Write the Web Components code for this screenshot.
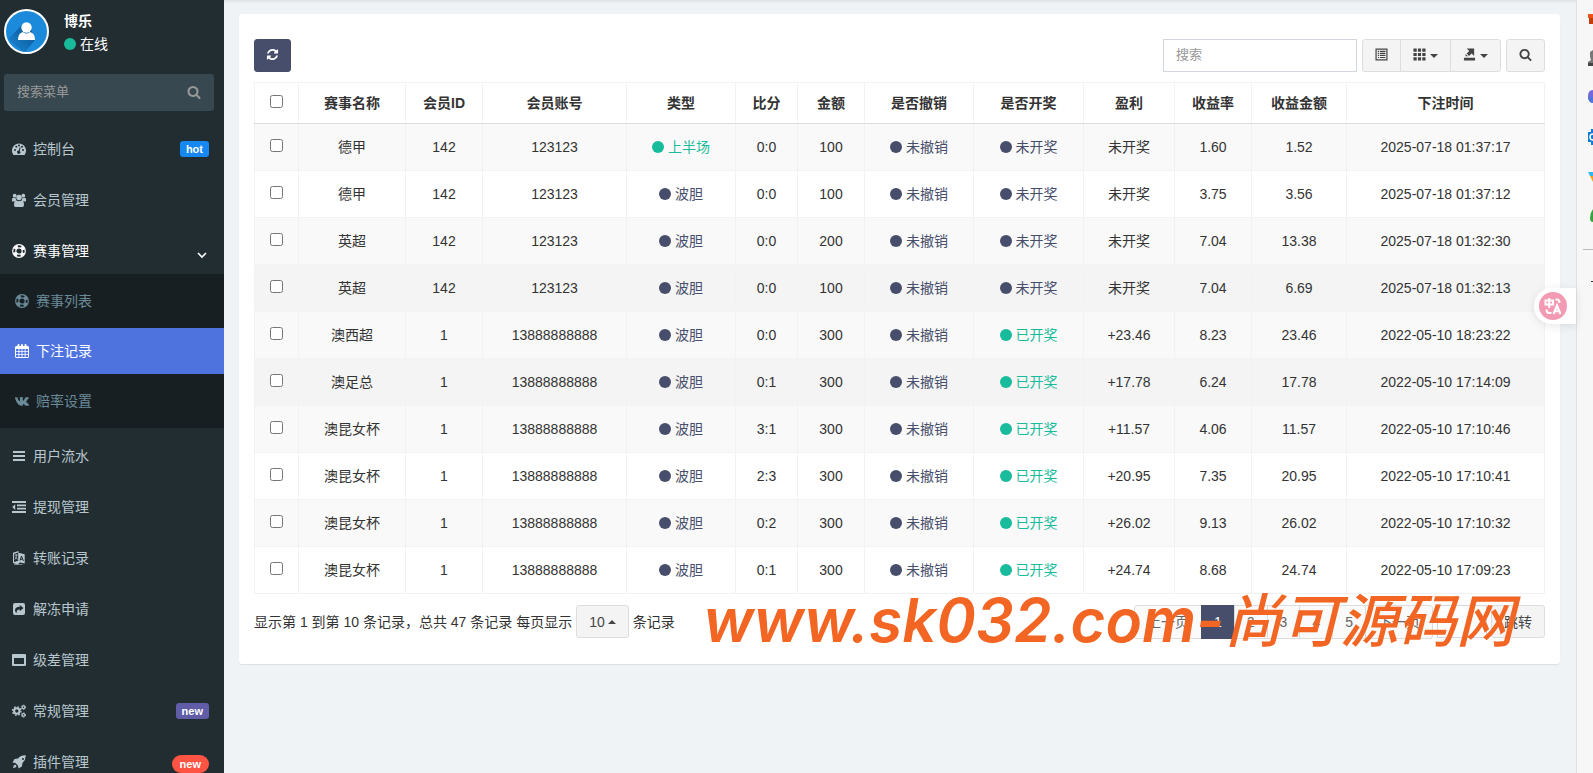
<!DOCTYPE html>
<html lang="zh-CN">
<head>
<meta charset="utf-8">
<title>下注记录</title>
<style>
  body {
    margin: 0;
    background: #eff3f6;
    color: #333;
    font: 14px/20px "Liberation Sans", "Noto Sans CJK SC", sans-serif;
  }
</style>
</head>
<body>
<admin-shell>
  <admin-sidebar slot="sidebar">
    <user-panel slot="user" name="博乐" status="在线"></user-panel>
    <menu-item icon="dashboard" badge="hot" tone="blue">控制台</menu-item>
    <menu-item icon="group">会员管理</menu-item>
    <menu-item icon="ring" open>赛事管理</menu-item>
    <sub-menu>
      <menu-item sub icon="ring">赛事列表</menu-item>
      <menu-item sub active icon="calendar">下注记录</menu-item>
      <menu-item sub icon="vk">赔率设置</menu-item>
    </sub-menu>
    <menu-item icon="bars">用户流水</menu-item>
    <menu-item icon="dedent">提现管理</menu-item>
    <menu-item icon="language">转账记录</menu-item>
    <menu-item icon="share">解冻申请</menu-item>
    <menu-item icon="window">级差管理</menu-item>
    <menu-item icon="cogs" badge="new" tone="purple">常规管理</menu-item>
    <menu-item icon="rocket" badge="new" tone="red">插件管理</menu-item>
  </admin-sidebar>
  <content-panel>
    <table-toolbar></table-toolbar>
    <bet-table></bet-table>
    <table-pager></table-pager>
  </content-panel>
  <browser-rail slot="rail"></browser-rail>
</admin-shell>

<script>
const icons = {
  search: '<g transform="scale(.0078125)"><path d="M1216 832q0-185-131.500-316.500t-316.500-131.500-316.500 131.500-131.500 316.500 131.500 316.500 316.500 131.500 316.500-131.500 131.500-316.500zm512 832q0 52-38 90t-90 38q-54 0-90-38l-343-342q-179 124-399 124-143 0-273.500-55.500t-225-150-150-225-55.500-273.500 55.500-273.500 150-225 225-150 273.500-55.500 273.500 55.500 225 150 150 225 55.500 273.500q0 220-124 399l343 343q37 37 37 90z"/></g>',
  refresh: '<g transform="scale(.0078125)"><path d="M1639 1056q0 5-1 7-64 268-268 434.500t-478 166.500q-146 0-282.500-55t-243.500-157l-129 129q-19 19-45 19t-45-19-19-45v-448q0-26 19-45t45-19h448q26 0 45 19t19 45-19 45l-137 137q71 66 161 102t187 36q134 0 250-65t186-179q11-17 53-117 8-23 30-23h192q13 0 22.500 9.500t9.500 22.500zm25-800v448q0 26-19 45t-45 19h-448q-26 0-45-19t-19-45 19-45l138-138q-148-137-349-137-134 0-250 65t-186 179q-11 17-53 117-8 23-30 23h-199q-13 0-22.500-9.500t-9.500-22.500v-7q65-268 270-434.500t480-166.500q146 0 284 55.500t245 156.500l130-129q19-19 45-19t45 19 19 45z"/></g>',
  dashboard: '<path fill-rule="evenodd" d="M1.200 12.500A7 7 0 1 1 12.800 12.500Q12.600 13 12.200 13H1.800Q1.400 13 1.200 12.500ZM2 8a1 1 0 1 0 2 0a1 1 0 1 0-2 0M3.300 4.700a1 1 0 1 0 2 0a1 1 0 1 0-2 0M6 3.500a1 1 0 1 0 2 0a1 1 0 1 0-2 0M10 8a1 1 0 1 0 2 0a1 1 0 1 0-2 0M9 4.700a1 1 0 1 0 2 0a1 1 0 1 0-2 0M7.700 5.300L6.700 8.600a1.600 1.600 0 1 0 1 .3L8.600 5.600Z"/>',
  group: '<circle cx="2.700" cy="2.700" r="1.900"/><circle cx="11.300" cy="2.700" r="1.900"/><circle cx="7" cy="4.500" r="2.700"/><path d="M0 8V6.400Q0 4.700 1.200 4.700L3.800 5.300Q3.800 6.500 4.600 7.400Q3.200 7.400 2.400 8.400H.8Q0 8.400 0 8ZM14 8V6.400Q14 4.700 12.800 4.700L10.200 5.300Q10.200 6.500 9.400 7.400Q10.800 7.400 11.600 8.400H13.200Q14 8.400 14 8ZM4.500 7.500Q7 9 9.500 7.500Q12 7.500 12 12Q12 14 10.400 14H3.600Q2 14 2 12Q2 7.500 4.500 7.500Z"/>',
  ring: '<circle cx="7" cy="7" r="6.300" fill="none" stroke="currentColor" stroke-width="1.200"/><circle cx="7" cy="7" r="3.200" fill="none" stroke="currentColor" stroke-width="1.200"/><circle cx="7" cy="7" r="4.800" fill="none" stroke="currentColor" stroke-width="2.800" stroke-dasharray="3.770 3.770" stroke-dashoffset="-1.885"/>',
  calendar: '<path fill-rule="evenodd" d="M1 2H2.500V1Q2.500 0 3.500 0T4.500 1V2H6V1Q6 0 7 0T8 1V2H9.500V1Q9.500 0 10.500 0T11.500 1V2H13L14 3V13L13 14H1L0 13V3ZM1 5V7H3.500V5ZM4.300 5V7H6.600V5ZM7.400 5V7H9.700V5ZM10.500 5V7H13V5ZM1 7.800V10H3.500V7.800ZM4.300 7.800V10H6.600V7.800ZM7.400 7.800V10H9.700V7.800ZM10.500 7.800V10H13V7.800ZM1 10.800V13H3.500V10.800ZM4.300 10.800V13H6.600V10.800ZM7.400 10.800V13H9.700V10.800ZM10.500 10.800V13H13V10.800Z"/>',
  vk: '<path d="M0 3.200H2.300Q3 6 4.700 7.200Q5 7 5 6V4.400L4.300 3.400Q5 2.800 7.300 3Q7.800 3.200 7.800 4V6.700Q8 7 8.500 6.500Q9.700 5 10.400 3.200H13.500Q14.200 3.300 13.500 4.500L11.300 7.300Q11 7.800 11.600 8.300Q14 10.300 14 11.200Q13.900 11.700 13 11.700H11Q10.400 11.700 9.500 10.700Q8.400 9.600 8 10V11Q8 11.700 7.300 11.700Q3.500 12 1.200 7.200Q.1 5 0 3.200Z"/>',
  bars: '<path d="M1 2H13V4H1ZM1 6H13V8H1ZM1 10H13V12H1Z"/>',
  dedent: '<path d="M0 1H14V3H0ZM5 4.500H14V6.300H5ZM5 7.800H14V9.600H5ZM0 11H14V13H0ZM3.200 4.300V9.900L.2 7.100Z"/>',
  language: '<path fill-rule="evenodd" d="M1 1.800L6.500 0V1.800L12.700 3.200V12.500L8 11.500L5.500 13.500L1 11.900ZM2 3V11L6.200 9.800V1.500Z"/><path d="M2.700 4.300L5.500 3.500M4 3V5M5 4Q4.600 7 2.700 8.600M3 5.500Q4 7.700 5.800 8.300M2 13.700H10.500" fill="none" stroke="currentColor" stroke-width=".7"/><path d="M8.100 9.500L9.500 5L11.400 10M8.500 8.200H10.500" fill="none" stroke="#222d32" stroke-width="1"/>',
  share: '<path fill-rule="evenodd" d="M3 1H11Q13 1 13 3V11Q13 13 11 13H3Q1 13 1 11V3Q1 1 3 1ZM7.800 3V4.700Q3 4.700 3 8.200Q3 10 4.700 11.200Q4 7.800 7.800 7.500V9.300L11.500 6.100Z"/>',
  window: '<path fill-rule="evenodd" d="M1 1H13Q14 1 14 2V12Q14 13 13 13H1Q0 13 0 12V2Q0 1 1 1ZM2 5V11H12V5Z"/>',
  cogs: '<circle cx="4.800" cy="7" r="2.700" fill="none" stroke="currentColor" stroke-width="2"/><circle cx="4.800" cy="7" r="4.200" fill="none" stroke="currentColor" stroke-width="1.400" stroke-dasharray="1.650 1.650"/><g fill="none" stroke="currentColor"><circle cx="11.500" cy="3.200" r="1.400" stroke-width="1.200"/><circle cx="11.500" cy="3.200" r="2.200" stroke-dasharray="1.150 1.150"/><circle cx="11.500" cy="11" r="1.400" stroke-width="1.200"/><circle cx="11.500" cy="11" r="2.200" stroke-dasharray="1.150 1.150"/></g>',
  rocket: '<path fill-rule="evenodd" d="M13.700.3Q14 4.500 10.500 8L9.900 11.500L6.500 13.500L6 10.600L3.400 8L.5 7.500L2.500 4.100L6 3.500Q9 0 13.700.3ZM10 4a1 1 0 1 0 2 0a1 1 0 1 0-2 0M3 9.500L4.700 11.100Q4 13 1 13Q1.200 10 3 9.500Z"/>',
  list: '<path fill-rule="evenodd" d="M.5.500H13.500V13.500H.5ZM1.800 1.800V12.200H12.200V1.800Z"/><path d="M3 3H4.300V4.300H3ZM5.200 3H11.200V4.300H5.200ZM3 5.200H4.300V6.500H3ZM5.200 5.200H11.200V6.500H5.200ZM3 7.400H4.300V8.700H3ZM5.200 7.400H11.200V8.700H5.200ZM3 9.600H4.300V10.900H3ZM5.200 9.600H11.200V10.900H5.200Z"/>',
  grid: '<path d="M.5.500H4V4H.5ZM5.300.500H8.700V4H5.300ZM10 .5H13.500V4H10ZM.5 5.300H4V8.700H.5ZM5.300 5.300H8.700V8.700H5.300ZM10 5.300H13.500V8.700H10ZM.5 10H4V13.500H.5ZM5.300 10H8.700V13.500H5.300ZM10 10H13.500V13.500H10Z"/>',
  exporter: '<path d="M1 10.500H13V13.500H1ZM4 .5H12V8.500L9.300 5.800L6.500 8.500L4 6L6.700 3.200Z"/><path d="M2.800 6.500L5.500 9H2.800Z"/>',
  chevron: '<path d="M3 5L7 9L11 5" fill="none" stroke="currentColor" stroke-width="1.600"/>'
};

class FaIcon extends HTMLElement {
  constructor() {
    super();
    this.attachShadow({ mode: 'open' });
  }

  connectedCallback() {
    this.shadowRoot.innerHTML = `
      <style>
        :host {
          display: inline-block;
          flex: none;
          width: 14px;
          height: 14px;
        }
        svg {
          display: block;
          width: 100%;
          height: 100%;
          fill: currentColor;
        }
      </style>
      <svg viewBox="0 0 14 14" aria-hidden="true">${icons[this.getAttribute('name')] || ''}</svg>
    `;
  }
}
customElements.define('fa-icon', FaIcon);

class AdminShell extends HTMLElement {
  constructor() {
    super();
    this.attachShadow({ mode: 'open' });
    this.shadowRoot.innerHTML = `
      <style>
        :host {
          display: grid;
          grid-template-columns: 224px minmax(0, 1fr) 17px;
          height: 100vh;
          overflow: hidden;
        }
        main {
          position: relative;
          padding: 14px 16px 14px 15px;
          box-shadow: inset 0 3px 3px -2px #d5dade;
        }
      </style>
      <slot name="sidebar"></slot>
      <main>
        <slot></slot>
        <translate-bubble></translate-bubble>
        <site-mark></site-mark>
      </main>
      <slot name="rail"></slot>
    `;
  }
}
customElements.define('admin-shell', AdminShell);

class AdminSidebar extends HTMLElement {
  constructor() {
    super();
    this.attachShadow({ mode: 'open' });
    this.shadowRoot.innerHTML = `
      <style>
        :host {
          display: block;
          overflow: hidden;
          background: #222d32;
        }
        form {
          display: flex;
          height: 37px;
          margin: 11px 10px 15px 4px;
          background: #374850;
          border-radius: 3px;
        }
        input {
          flex: 1;
          min-width: 0;
          padding: 0 13px 2px;
          border: 0;
          background: none;
          color: #b8c7ce;
          font: 13px/20px "Liberation Sans", "Noto Sans CJK SC", sans-serif;
        }
        input::placeholder {
          color: #999;
        }
        button {
          display: flex;
          align-items: center;
          padding: 0 13px 2px;
          border: 0;
          background: none;
          color: #999;
        }
        nav {
          display: flex;
          flex-direction: column;
          gap: 5px;
        }
      </style>
      <slot name="user"></slot>
      <form>
        <input type="text" placeholder="搜索菜单" aria-label="搜索菜单">
        <button type="button" aria-label="搜索"><fa-icon name="search"></fa-icon></button>
      </form>
      <nav><slot></slot></nav>
    `;
  }
}
customElements.define('admin-sidebar', AdminSidebar);

class UserPanel extends HTMLElement {
  constructor() {
    super();
    this.attachShadow({ mode: 'open' });
  }

  connectedCallback() {
    this.shadowRoot.innerHTML = `
      <style>
        :host {
          display: flex;
          gap: 15px;
          padding: 9px 4px;
          color: #fff;
        }
        .avatar {
          width: 45px;
          height: 45px;
        }
        .info {
          display: flex;
          flex-direction: column;
          justify-content: flex-end;
          gap: 3px;
        }
        a {
          display: flex;
          align-items: center;
          gap: 4px;
          color: #fff;
          text-decoration: none;
        }
        a::before {
          content: "";
          width: 12px;
          height: 12px;
          border-radius: 50%;
          background: #18bc9c;
        }
      </style>
      <svg class="avatar" viewBox="0 0 45 45" aria-hidden="true">
        <defs>
          <clipPath id="round"><circle cx="22.500" cy="22.500" r="21"/></clipPath>
          <linearGradient id="shade" x1="1" y1="0" x2="0" y2="1">
            <stop offset=".2" stop-color="#0d5c9b"/><stop offset="1" stop-color="#1c8adb"/>
          </linearGradient>
        </defs>
        <circle cx="22.500" cy="22.500" r="21.500" fill="#1c8adb"/>
        <path clip-path="url(#round)" d="M18 16L4 30L20 44L31 31L27 20Z" fill="url(#shade)"/>
        <circle cx="22.500" cy="22.500" r="21.500" fill="none" stroke="#fff" stroke-width="2"/>
        <circle cx="22.500" cy="18.500" r="5.200" fill="#fff"/>
        <path d="M14 31Q14 24 19 23Q22.500 26 26 23Q31 24 31 31Z" fill="#fff"/>
      </svg>
      <div class="info">
        <strong>${this.getAttribute('name')}</strong>
        <a href="#">${this.getAttribute('status')}</a>
      </div>
    `;
  }
}
customElements.define('user-panel', UserPanel);

class MenuItem extends HTMLElement {
  constructor() {
    super();
    this.attachShadow({ mode: 'open' });
  }

  connectedCallback() {
    this.shadowRoot.innerHTML = `
      <style>
        :host {
          display: block;
        }
        a {
          display: flex;
          align-items: center;
          gap: 7px;
          height: 46px;
          padding: 0 15px 0 12px;
          color: #b8c7ce;
          text-decoration: none;
        }
        :host([open]) a {
          color: #fff;
        }
        :host([sub]) a {
          padding-left: 15px;
          color: #6b8a98;
        }
        :host([active]) a {
          background: #4e73df;
          color: #fff;
        }
        .label {
          flex: 1;
        }
        .badge {
          padding: 0 6px;
          border-radius: 3px;
          color: #fff;
          font-size: 11px;
          font-weight: 700;
          line-height: 16px;
        }
        .blue { background: #1688f1; }
        .purple { background: #605ca8; }
        .red {
          margin-top: 3px;
          padding: 1px 8px;
          border-radius: 9px;
          background: #ff5443;
        }
        .arrow {
          margin-top: 8px;
        }
      </style>
      <a href="#">
        <fa-icon name="${this.getAttribute('icon')}"></fa-icon>
        <span class="label"><slot></slot></span>
        ${this.badge}
      </a>
    `;
  }

  get badge() {
    if (this.hasAttribute('open')) return '<fa-icon class="arrow" name="chevron"></fa-icon>';
    const text = this.getAttribute('badge');
    return text ? `<span class="badge ${this.getAttribute('tone')}">${text}</span>` : '';
  }
}
customElements.define('menu-item', MenuItem);

class SubMenu extends HTMLElement {
  constructor() {
    super();
    this.attachShadow({ mode: 'open' });
    this.shadowRoot.innerHTML = `
      <style>
        :host {
          display: flex;
          flex-direction: column;
          gap: 4px;
          margin-top: -5px;
          padding: 4px 0;
          background: #171f23;
        }
      </style>
      <slot></slot>
    `;
  }
}
customElements.define('sub-menu', SubMenu);

class ContentPanel extends HTMLElement {
  constructor() {
    super();
    this.attachShadow({ mode: 'open' });
    this.shadowRoot.innerHTML = `
      <style>
        :host {
          display: flex;
          flex-direction: column;
          gap: 10px;
          padding: 25px 15px;
          border-radius: 3px;
          background: #fff;
          box-shadow: 0 1px 1px rgba(0, 0, 0, .08);
        }
      </style>
      <slot></slot>
    `;
  }
}
customElements.define('content-panel', ContentPanel);

class TableToolbar extends HTMLElement {
  constructor() {
    super();
    this.attachShadow({ mode: 'open' });
    this.shadowRoot.innerHTML = `
      <style>
        :host {
          display: flex;
          gap: 5px;
          height: 33px;
        }
        fa-icon {
          width: 13px;
          height: 13px;
        }
        button {
          display: flex;
          align-items: center;
          justify-content: center;
          gap: 4px;
          padding: 0 12px 3px;
          border: 1px solid #ddd;
          border-radius: 3px;
          background: #f4f4f4;
          color: #444;
        }
        .refresh {
          margin-right: auto;
          padding: 0 11px 3px;
          border-color: #474e6b;
          background: #474e6b;
          color: #fff;
        }
        input {
          box-sizing: border-box;
          width: 194px;
          padding: 0 12px 2px;
          border: 1px solid #d2d6de;
          font: 13px/20px "Liberation Sans", "Noto Sans CJK SC", sans-serif;
        }
        input::placeholder {
          color: #999;
        }
        .group {
          display: flex;
        }
        .group button {
          margin-left: -1px;
          border-radius: 0;
        }
        .group button:first-child {
          margin-left: 0;
          border-radius: 3px 0 0 3px;
        }
        .group button:last-child {
          border-radius: 0 3px 3px 0;
        }
        .caret {
          margin-top: 4px;
          border: 4px solid transparent;
          border-top-color: currentColor;
          border-bottom: 0;
        }
      </style>
      <button class="refresh" type="button" aria-label="刷新"><fa-icon name="refresh"></fa-icon></button>
      <input type="text" placeholder="搜索" aria-label="搜索">
      <div class="group">
        <button type="button" aria-label="切换"><fa-icon name="list"></fa-icon></button>
        <button type="button" aria-label="列"><fa-icon name="grid"></fa-icon><span class="caret"></span></button>
        <button type="button" aria-label="导出"><fa-icon name="exporter"></fa-icon><span class="caret"></span></button>
      </div>
      <button type="button" aria-label="普通搜索"><fa-icon name="search"></fa-icon></button>
    `;
  }
}
customElements.define('table-toolbar', TableToolbar);

class StatusDot extends HTMLElement {
  constructor() {
    super();
    this.attachShadow({ mode: 'open' });
    this.shadowRoot.innerHTML = `
      <style>
        :host {
          display: inline-flex;
          align-items: center;
          gap: 4px;
          color: #474e6b;
        }
        :host([on]) {
          color: #18bc9c;
        }
        :host::before {
          content: "";
          width: 12px;
          height: 12px;
          border-radius: 50%;
          background: currentColor;
        }
      </style>
      <slot></slot>
    `;
  }
}
customElements.define('status-dot', StatusDot);

const columns = [
  ['赛事名称', 107], ['会员ID', 77], ['会员账号', 144], ['类型', 109], ['比分', 62],
  ['金额', 67], ['是否撤销', 109], ['是否开奖', 110], ['盈利', 91], ['收益率', 77],
  ['收益金额', 95], ['下注时间', 198]
];

const rows = [
  ['德甲', '142', '123123', '上半场', '0:0', '100', '未撤销', '未开奖', '未开奖', '1.60', '1.52', '2025-07-18 01:37:17'],
  ['德甲', '142', '123123', '波胆', '0:0', '100', '未撤销', '未开奖', '未开奖', '3.75', '3.56', '2025-07-18 01:37:12'],
  ['英超', '142', '123123', '波胆', '0:0', '200', '未撤销', '未开奖', '未开奖', '7.04', '13.38', '2025-07-18 01:32:30'],
  ['英超', '142', '123123', '波胆', '0:0', '100', '未撤销', '未开奖', '未开奖', '7.04', '6.69', '2025-07-18 01:32:13'],
  ['澳西超', '1', '13888888888', '波胆', '0:0', '300', '未撤销', '已开奖', '+23.46', '8.23', '23.46', '2022-05-10 18:23:22'],
  ['澳足总', '1', '13888888888', '波胆', '0:1', '300', '未撤销', '已开奖', '+17.78', '6.24', '17.78', '2022-05-10 17:14:09'],
  ['澳昆女杯', '1', '13888888888', '波胆', '3:1', '300', '未撤销', '已开奖', '+11.57', '4.06', '11.57', '2022-05-10 17:10:46'],
  ['澳昆女杯', '1', '13888888888', '波胆', '2:3', '300', '未撤销', '已开奖', '+20.95', '7.35', '20.95', '2022-05-10 17:10:41'],
  ['澳昆女杯', '1', '13888888888', '波胆', '0:2', '300', '未撤销', '已开奖', '+26.02', '9.13', '26.02', '2022-05-10 17:10:32'],
  ['澳昆女杯', '1', '13888888888', '波胆', '0:1', '300', '未撤销', '已开奖', '+24.74', '8.68', '24.74', '2022-05-10 17:09:23']
];

const dotted = [3, 6, 7];
const highlighted = [3, 5];

class BetTable extends HTMLElement {
  constructor() {
    super();
    this.attachShadow({ mode: 'open' });
    this.shadowRoot.innerHTML = `
      <style>
        :host {
          display: block;
        }
        table {
          width: 100%;
          table-layout: fixed;
          border-collapse: collapse;
          text-align: center;
        }
        th, td {
          box-sizing: border-box;
          height: 47px;
          padding: 0;
          border: 1px solid #f2f2f2;
          white-space: nowrap;
        }
        th {
          height: 41px;
          border-bottom-color: #ddd;
        }
        tbody tr:nth-child(odd) { background: #f9f9f9; }
        tbody tr.hover { background: #f4f4f4; }
        input {
          display: block;
          width: 13px;
          height: 13px;
          margin: 0 auto 3px;
        }
      </style>
      <table>
        <colgroup><col style="width: 44px">${columns.map(c => `<col style="width: ${c[1]}px">`).join('')}</colgroup>
        <thead>
          <tr>
            <th><input type="checkbox" aria-label="全选"></th>
            ${columns.map(c => `<th>${c[0]}</th>`).join('')}
          </tr>
        </thead>
        <tbody>${rows.map((row, i) => this.row(row, i)).join('')}</tbody>
      </table>
    `;
  }

  row(row, i) {
    return `
      <tr class="${highlighted.includes(i) ? 'hover' : ''}">
        <td><input type="checkbox" aria-label="选择第 ${i + 1} 行"></td>
        ${row.map((text, n) => `<td>${dotted.includes(n) ? this.dot(text) : text}</td>`).join('')}
      </tr>
    `;
  }

  dot(text) {
    const on = text === '上半场' || text === '已开奖';
    return `<status-dot${on ? ' on' : ''}>${text}</status-dot>`;
  }
}
customElements.define('bet-table', BetTable);

class TablePager extends HTMLElement {
  constructor() {
    super();
    this.attachShadow({ mode: 'open' });
    this.shadowRoot.innerHTML = `
      <style>
        :host {
          display: flex;
          align-items: center;
          justify-content: space-between;
          height: 35px;
        }
        .detail, .pages, ul {
          display: flex;
          align-items: center;
        }
        .detail {
          gap: 4px;
        }
        button, .go {
          box-sizing: border-box;
          height: 33px;
          padding: 0 12px;
          border: 1px solid #ddd;
          border-radius: 3px;
          background: #f4f4f4;
          color: #444;
          font: inherit;
        }
        .size {
          display: flex;
          align-items: center;
          gap: 3px;
        }
        .caret {
          border: 4px solid transparent;
          border-bottom-color: currentColor;
          border-top: 0;
        }
        .pages {
          gap: 4px;
        }
        ul {
          margin: 0;
          padding: 0;
          list-style: none;
        }
        li a {
          display: block;
          margin-left: -1px;
          padding: 6px 12px;
          border: 1px solid #ddd;
          background: #fafafa;
          color: #666;
          text-decoration: none;
        }
        li:first-child a {
          margin-left: 0;
          border-radius: 3px 0 0 3px;
        }
        li:last-child a {
          border-radius: 0 3px 3px 0;
        }
        li .current {
          border-color: #474e6b;
          background: #474e6b;
          color: #fff;
        }
        .go {
          width: 50px;
          border-color: #d2d6de;
          border-radius: 0;
          background: #fff;
        }
      </style>
      <div class="detail">
        <span>显示第 1 到第 10 条记录，总共 47 条记录 每页显示</span>
        <button class="size" type="button">10<span class="caret"></span></button>
        <span>条记录</span>
      </div>
      <div class="pages">
        <ul>
          <li><a href="#">上一页</a></li>
          <li><a class="current" href="#">1</a></li>
          <li><a href="#">2</a></li>
          <li><a href="#">3</a></li>
          <li><a href="#">4</a></li>
          <li><a href="#">5</a></li>
          <li><a href="#">下一页</a></li>
        </ul>
        <input class="go" type="text" aria-label="页码">
        <button type="button">跳转</button>
      </div>
    `;
  }
}
customElements.define('table-pager', TablePager);

// floats over the pager
class SiteMark extends HTMLElement {
  constructor() {
    super();
    this.attachShadow({ mode: 'open' });
    this.shadowRoot.innerHTML = `
      <style>
        :host {
          position: absolute;
          top: 580px;
          right: 62px;
          color: #f26522;
          font: italic 600 60px/80px Inter, "Noto Sans CJK SC", sans-serif;
          white-space: nowrap;
          pointer-events: none;
        }
        span {
          font-size: 58px;
          font-weight: 500;
        }
      </style>
      www.sk032.com-<span>尚可源码网</span>
    `;
  }
}
customElements.define('site-mark', SiteMark);

// translate shortcut docked to the right edge
class TranslateBubble extends HTMLElement {
  constructor() {
    super();
    this.attachShadow({ mode: 'open' });
    this.shadowRoot.innerHTML = `
      <style>
        :host {
          position: absolute;
          top: 288px;
          right: 0;
        }
        button {
          display: block;
          width: 42px;
          height: 36px;
          padding: 4px 5px;
          border: 0;
          border-radius: 18px 0 0 18px;
          background: rgba(255, 255, 255, .9);
          box-shadow: 0 2px 10px rgba(0, 0, 0, .1);
        }
        svg {
          display: block;
          width: 28px;
          height: 28px;
        }
      </style>
      <button type="button" aria-label="翻译">
        <svg viewBox="0 0 28 28" fill="none" stroke="#fff" stroke-width="2">
          <circle cx="14" cy="14" r="14" fill="#f29bb2" stroke="none"/>
          <path d="M6.500 8.500H14V12.500H6.500ZM10.200 6V16M16.500 7.500H18Q20.500 7.500 20.500 11M7.500 17.500Q7.500 21 10.500 21H12.500M14.500 22L18 13.500L21.500 22M16 19.200H20"/>
        </svg>
      </button>
    `;
  }
}
customElements.define('translate-bubble', TranslateBubble);

class BrowserRail extends HTMLElement {
  constructor() {
    super();
    this.attachShadow({ mode: 'open' });
    this.shadowRoot.innerHTML = `
      <style>
        :host {
          display: block;
          overflow: hidden;
          background: #f7f7f7;
          box-shadow: inset 1px 0 #dfe2e5;
        }
        svg {
          display: block;
          width: 17px;
          height: 300px;
        }
      </style>
      <svg viewBox="0 0 17 300" aria-hidden="true">
        <path d="M12 14H17V18H12Z" fill="#e8541a"/><path d="M13 18H17V24H13Z" fill="#c43d0c"/>
        <path d="M17 50L14 52V57L15 60L12 62V66H17Z" fill="#777"/><path d="M12 63H17V66H12Z" fill="#444"/>
        <path d="M17 90Q12 90 12 96Q12 103 17 103Z" fill="#7468d9"/><path d="M12 97Q13 103 17 103V97Z" fill="#4c78dc"/>
        <path d="M15 129H17V145H15V142H12V132H15Z" fill="#0f7bd7"/><path d="M17 134Q14 134 14 137T17 140" fill="none" stroke="#fff" stroke-width="1.500"/>
        <path d="M12 172H17V176H14Z" fill="#35b5ef"/><path d="M14 176H17V182Z" fill="#f5a01d"/>
        <path d="M17 209Q14 213 14 218Q14 222 17 222Z" fill="#35a33a"/>
        <path d="M7 249.500H17" stroke="#bbb"/>
        <path d="M15 281.500H17" stroke="#333"/>
      </svg>
    `;
  }
}
customElements.define('browser-rail', BrowserRail);
</script>
</body>
</html>
